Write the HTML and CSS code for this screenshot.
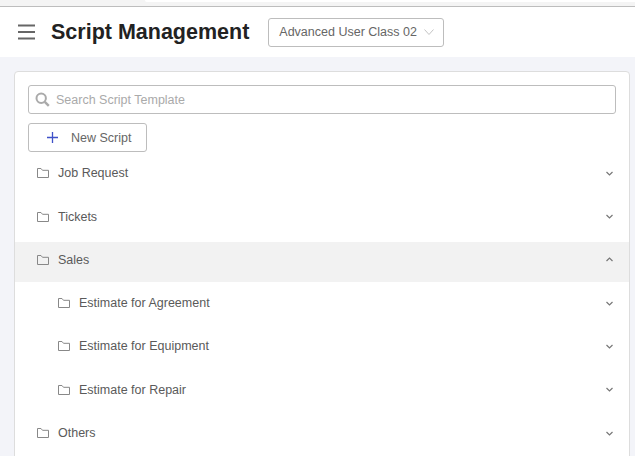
FILE: index.html
```html
<!DOCTYPE html>
<html>
<head>
	<title>Script Management</title>
	<link rel="stylesheet" href="styles.css">
</head>
<body>
	<div class="topStrip"><div class="topTab"></div></div>
	<header class="header">
		<svg class="menuIcon" width="17" height="16" viewBox="0 0 17 16"><path d="M0 1.500h17M0 8h17M0 14.500h17" stroke="#666" stroke-width="2" fill="none"/></svg>
		<h1 class="pageTitle">Script Management</h1>
		<div class="classSelect">
			<span>Advanced User Class 02</span>
			<svg width="10" height="6" viewBox="0 0 10 6"><path d="M.5 .5l4.500 5 4.500-5" stroke="#c4c4c4" fill="none"/></svg>
		</div>
	</header>

	<main class="content">
		<div class="card">
			<div class="tools">
				<div class="search">
					<svg width="15" height="15" viewBox="0 0 15 15"><circle cx="6.200" cy="6.200" r="4.700" stroke="#aaa" stroke-width="2" fill="none"/><path d="M9.800 9.800l4 4" stroke="#aaa" stroke-width="2.400" fill="none"/></svg>
					<span>Search Script Template</span>
				</div>
				<div class="newScript">
					<svg width="11" height="11" viewBox="0 0 11 11"><path d="M5.500 0v11M0 5.500h11" stroke="#3f51c8" stroke-width="1.300" fill="none"/></svg>
					<span>New Script</span>
				</div>
			</div>

			<div class="row">
				<svg class="folder" width="12" height="10" viewBox="0 0 12 10"><path d="M.5 9.500v-9h3.500l1.500 1.800h6v7.200z" stroke="#888" fill="none"/></svg>
				<span class="rowName">Job Request</span>
				<svg class="chev" width="7" height="5" viewBox="0 0 7 5"><path d="M.5 1l3 3 3-3" stroke="#777" stroke-width="1.200" fill="none"/></svg>
			</div>
			<div class="row">
				<svg class="folder" width="12" height="10" viewBox="0 0 12 10"><path d="M.5 9.500v-9h3.500l1.500 1.800h6v7.200z" stroke="#888" fill="none"/></svg>
				<span class="rowName">Tickets</span>
				<svg class="chev" width="7" height="5" viewBox="0 0 7 5"><path d="M.5 1l3 3 3-3" stroke="#777" stroke-width="1.200" fill="none"/></svg>
			</div>
			<div class="row open">
				<svg class="folder" width="12" height="10" viewBox="0 0 12 10"><path d="M.5 9.500v-9h3.500l1.500 1.800h6v7.200z" stroke="#888" fill="none"/></svg>
				<span class="rowName">Sales</span>
				<svg class="chev" width="7" height="5" viewBox="0 0 7 5"><path d="M.5 4l3-3 3 3" stroke="#777" stroke-width="1.200" fill="none"/></svg>
			</div>
			<div class="row sub">
				<svg class="folder" width="12" height="10" viewBox="0 0 12 10"><path d="M.5 9.500v-9h3.500l1.500 1.800h6v7.200z" stroke="#888" fill="none"/></svg>
				<span class="rowName">Estimate for Agreement</span>
				<svg class="chev" width="7" height="5" viewBox="0 0 7 5"><path d="M.5 1l3 3 3-3" stroke="#777" stroke-width="1.200" fill="none"/></svg>
			</div>
			<div class="row sub">
				<svg class="folder" width="12" height="10" viewBox="0 0 12 10"><path d="M.5 9.500v-9h3.500l1.500 1.800h6v7.200z" stroke="#888" fill="none"/></svg>
				<span class="rowName">Estimate for Equipment</span>
				<svg class="chev" width="7" height="5" viewBox="0 0 7 5"><path d="M.5 1l3 3 3-3" stroke="#777" stroke-width="1.200" fill="none"/></svg>
			</div>
			<div class="row sub">
				<svg class="folder" width="12" height="10" viewBox="0 0 12 10"><path d="M.5 9.500v-9h3.500l1.500 1.800h6v7.200z" stroke="#888" fill="none"/></svg>
				<span class="rowName">Estimate for Repair</span>
				<svg class="chev" width="7" height="5" viewBox="0 0 7 5"><path d="M.5 1l3 3 3-3" stroke="#777" stroke-width="1.200" fill="none"/></svg>
			</div>
			<div class="row">
				<svg class="folder" width="12" height="10" viewBox="0 0 12 10"><path d="M.5 9.500v-9h3.500l1.500 1.800h6v7.200z" stroke="#888" fill="none"/></svg>
				<span class="rowName">Others</span>
				<svg class="chev" width="7" height="5" viewBox="0 0 7 5"><path d="M.5 1l3 3 3-3" stroke="#777" stroke-width="1.200" fill="none"/></svg>
			</div>
		</div>
	</main>
</body>
</html>
```

FILE: styles.css
```css
* {
	box-sizing: border-box;
}

html, body {
	height: 100%;
}

body {
	margin: 0;
	overflow: hidden;
	background-color: #F3F4F9;
	font-family: "Liberation Sans", Arial, sans-serif;
	font-size: 12.500px;
	color: #5A5A5A;
}

.topStrip {
	height: 7px;
	padding-left: 145px;
	background-color: #F4F4F4;
	border-bottom: 1px solid #BDBDBD;
}

.topTab {
	height: 2px;
	background-color: #FFF;
	border-bottom-left-radius: 3px;
}

.header {
	display: flex;
	align-items: center;
	height: 50px;
	padding-left: 18px;
	background-color: #FFF;
}

.menuIcon {
	margin-right: 16px;
}

.pageTitle {
	margin: 0 19px 0 0;
	font-size: 21.500px;
	font-weight: bold;
	color: #222;
}

.classSelect {
	display: flex;
	align-items: center;
	gap: 7px;
	height: 29px;
	padding: 0 9px 0 10px;
	border: 1px solid #BDBDBD;
	border-radius: 3px;
	color: #666;
}

.content {
	padding: 14px 5px 0 14px;
}

.card {
	height: 400px;
	background-color: #FFF;
	border: 1px solid #DDD;
	border-radius: 4px 4px 0 0;
}

.tools {
	padding: 13px 13px 0;
}

.search {
	display: flex;
	align-items: center;
	gap: 6px;
	height: 29px;
	padding-left: 6px;
	border: 1px solid #BDBDBD;
	border-radius: 3px;
	color: #AAA;
}

.newScript {
	display: flex;
	align-items: center;
	gap: 13px;
	width: 119px;
	height: 29px;
	margin-top: 9px;
	padding-left: 18px;
	border: 1px solid #BDBDBD;
	border-radius: 3px;
	color: #666;
}

.row {
	display: flex;
	align-items: center;
	height: 40px;
	margin-top: 3.300px;
	padding: 0 16px 4px 22px;
}

.row.open {
	background-color: #F2F2F2;
}

.row.sub {
	padding-left: 43px;
}

.folder {
	margin-right: 9px;
}

.rowName {
	flex: 1;
}
```
